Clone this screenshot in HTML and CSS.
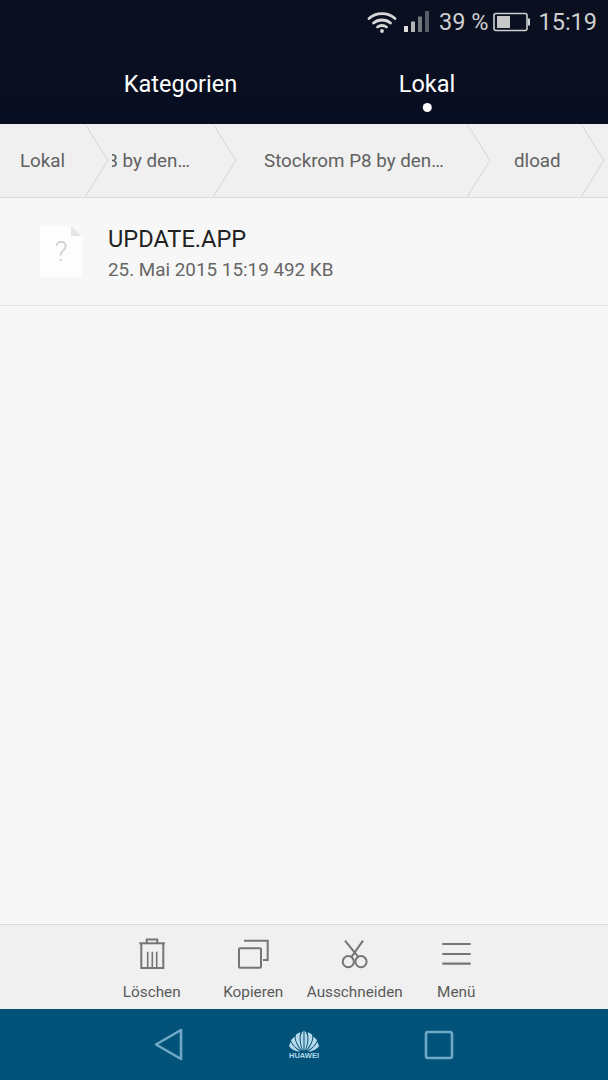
FILE: index.html
```html
<!DOCTYPE html>
<html lang="de">
<head>
    <meta charset="UTF-8">
    <meta name="viewport" content="width=device-width, initial-scale=1.0">
    <title>Dateien</title>
    <link rel="stylesheet" href="styles.css">
</head>
<body>
    <div class="screen">
        <div class="header">
            <div class="status-bar">
                <svg class="icon-wifi" width="30" height="22" viewBox="0 0 30 22" fill="none" stroke="#d8d8d8" stroke-width="2.800" stroke-linecap="round">
                    <path d="M2 7.500 C9 1 21 1 28 7.500"/>
                    <path d="M6.500 12 C11 8 19 8 23.500 12"/>
                    <path d="M10.500 16 C13 14 17 14 19.500 16"/>
                    <circle cx="15" cy="20" r="1.900" fill="#d8d8d8" stroke="none"/>
                </svg>
                <svg class="icon-signal" width="26" height="22" viewBox="0 0 26 22">
                    <rect x="0" y="15" width="4" height="6" fill="#dcdcdc"/>
                    <rect x="7" y="10.500" width="4" height="10.500" fill="#b4b4b4"/>
                    <rect x="14" y="5.500" width="4" height="15.500" fill="#74777e"/>
                    <rect x="21" y="0" width="4" height="21" fill="#5a5d66"/>
                </svg>
                <span class="status-text percent">39 %</span>
                <svg class="icon-battery" width="38" height="20" viewBox="0 0 38 20">
                    <rect x="1" y="1.500" width="33" height="17" rx="2" fill="none" stroke="#d0d0d0" stroke-width="1.600"/>
                    <rect x="4" y="4" width="13" height="12" fill="#c8c8c8"/>
                    <rect x="35" y="6.500" width="2" height="7" fill="#d0d0d0"/>
                </svg>
                <span class="status-text">15:19</span>
            </div>
            <div class="tabs">
                <div class="tab tab-left">Kategorien</div>
                <div class="tab tab-right active">Lokal</div>
            </div>
        </div>

        <div class="breadcrumbs">
            <div class="crumb crumb-1"><span>Lokal</span><svg class="chevron" width="24" height="73" viewBox="0 0 24 73"><path d="M0 0 L23 36.500 L0 73" fill="#f0f0f0" stroke="#d4d4d4"/></svg></div>
            <div class="crumb crumb-2"><span class="crumb-clip">P8 by den…</span><svg class="chevron" width="24" height="73" viewBox="0 0 24 73"><path d="M0 0 L23 36.500 L0 73" fill="#f0f0f0" stroke="#d4d4d4"/></svg></div>
            <div class="crumb crumb-3"><span>Stockrom P8 by den…</span><svg class="chevron" width="24" height="73" viewBox="0 0 24 73"><path d="M0 0 L23 36.500 L0 73" fill="#f0f0f0" stroke="#d4d4d4"/></svg></div>
            <div class="crumb crumb-4"><span>dload</span><svg class="chevron" width="24" height="73" viewBox="0 0 24 73"><path d="M0 0 L23 36.500 L0 73" fill="#f0f0f0" stroke="#d4d4d4"/></svg></div>
        </div>

        <div class="file-list">
            <div class="file-row">
                <div class="file-icon"><span>?</span></div>
                <div class="file-info">
                    <div class="file-name">UPDATE.APP</div>
                    <div class="file-meta">25. Mai 2015 15:19 492 KB</div>
                </div>
            </div>
        </div>

        <div class="toolbar">
            <div class="tool">
                <svg width="32" height="32" viewBox="0 0 32 32" fill="none" stroke="#757575" stroke-width="2">
                    <path d="M3.300 5.300 H29"/>
                    <path d="M10.700 5.300 V1.500 H21.300 V5.300"/>
                    <path d="M5.300 5.300 V30 H27.300 V5.300"/>
                    <path d="M11.700 13.700 V30 M16.300 13.700 V30 M20.700 13.700 V30" stroke-width="1.600"/>
                </svg>
                <span>Löschen</span>
            </div>
            <div class="tool">
                <svg width="32" height="32" viewBox="0 0 32 32" fill="none" stroke="#757575" stroke-width="2">
                    <rect x="2" y="10.300" width="22" height="19.500" rx="1"/>
                    <path d="M7 2.700 H30.700 V22 H26"/>
                </svg>
                <span>Kopieren</span>
            </div>
            <div class="tool">
                <svg width="32" height="32" viewBox="0 0 32 32" fill="none" stroke="#757575" stroke-width="2">
                    <circle cx="9.300" cy="23.700" r="5.600"/>
                    <circle cx="22" cy="23.700" r="5.600"/>
                    <path d="M6 2.700 L19 18.700 M24 2.700 L12.700 18.700"/>
                </svg>
                <span>Ausschneiden</span>
            </div>
            <div class="tool">
                <svg width="32" height="32" viewBox="0 0 32 32" fill="none" stroke="#757575" stroke-width="2.200">
                    <path d="M2.300 6 H30.700 M2.300 16 H30.700 M2.300 25.700 H30.700"/>
                </svg>
                <span>Menü</span>
            </div>
        </div>

        <div class="nav-bar">
            <svg width="30" height="34" viewBox="0 0 30 34" fill="none" stroke="#6fa9c6" stroke-width="2.600" stroke-linejoin="round">
                <path d="M27 2 V31 L2 16.500 Z"/>
            </svg>
            <div class="logo">
                <svg width="30" height="22" viewBox="0 0 30 22" fill="#b4d9ea">
                    <path d="M14.500 21 C11.500 15 10.500 6 13 2.500 L14.500 0.500 Z"/>
                    <path d="M15.500 21 C18.500 15 19.500 6 17 2.500 L15.500 0.500 Z"/>
                    <path d="M13.300 20.500 C9 16 5.500 9.500 7 4.500 L11.300 2 C9.800 8 10.500 14 13.300 20.500 Z"/>
                    <path d="M16.700 20.500 C21 16 24.500 9.500 23 4.500 L18.700 2 C20.200 8 19.500 14 16.700 20.500 Z"/>
                    <path d="M12.300 20.800 C7.500 18.500 2.500 14 2 10 L5.500 6.500 C6 12 8.500 17 12.300 20.800 Z"/>
                    <path d="M17.700 20.800 C22.500 18.500 27.500 14 28 10 L24.500 6.500 C24 12 21.500 17 17.700 20.800 Z"/>
                    <path d="M11 21.500 C7 21.500 2 19.500 0 16 L1.500 12 C4 16 7.500 19.500 11 21.500 Z"/>
                    <path d="M19 21.500 C23 21.500 28 19.500 30 16 L28.500 12 C26 16 22.500 19.500 19 21.500 Z"/>
                </svg>
                <span>HUAWEI</span>
            </div>
            <svg width="30" height="30" viewBox="0 0 30 30" fill="none" stroke="#6fa9c6" stroke-width="2.600">
                <rect x="2" y="2" width="26" height="26" rx="2"/>
            </svg>
        </div>
    </div>
</body>
</html>
```

FILE: styles.css
```css
* {
    margin: 0;
    padding: 0;
    box-sizing: border-box;
}

body {
    font-family: Roboto, 'Liberation Sans', sans-serif;
    background: #f7f7f7;
}

.screen {
    width: 608px;
    height: 1080px;
    display: flex;
    flex-direction: column;
    overflow: hidden;
}

.header {
    height: 124px;
    background: linear-gradient(180deg, #0a1020 0%, #090f20 60%, #080e22 100%);
    color: white;
}

.status-bar {
    height: 44px;
    display: flex;
    align-items: center;
    justify-content: flex-end;
    padding-right: 11px;
}

.status-text {
    font-size: 23.500px;
    color: #cfcfcf;
}

.icon-wifi {
    margin-right: 7px;
}

.icon-signal {
    margin-right: 9px;
}

.percent {
    margin-right: 5px;
}

.icon-battery {
    margin-right: 7px;
}

.tabs {
    position: relative;
    height: 80px;
}

.tab {
    position: absolute;
    top: 26px;
    font-size: 23.500px;
    transform: translateX(-50%);
}

.tab-left {
    left: 180.500px;
}

.tab-right {
    left: 427px;
}

.active::after {
    content: '';
    display: block;
    width: 9px;
    height: 9px;
    margin: 5px auto 0;
    border-radius: 50%;
    background: white;
}

.breadcrumbs {
    height: 74px;
    display: flex;
    background: #f0f0f0;
    border-bottom: 1px solid #dcdcdc;
}

.crumb {
    position: relative;
    height: 73px;
    flex: none;
    display: flex;
    align-items: center;
    padding-top: 1px;
    font-size: 18.800px;
    color: #616161;
    white-space: nowrap;
}

.chevron {
    position: absolute;
    right: -24px;
    top: 0;
    z-index: 2;
}

.crumb-1 {
    width: 85px;
    padding-left: 20px;
}

.crumb-2 {
    width: 128px;
    padding-left: 27px;
}

/* the long name is cut off on its left side */
.crumb-clip {
    width: 78px;
    display: flex;
    justify-content: flex-end;
    overflow: hidden;
}

.crumb-3 {
    width: 254px;
    padding-left: 51px;
}

.crumb-4 {
    width: 114px;
    padding-left: 47px;
}

.file-list {
    flex: 1;
    background: #f7f7f7;
}

.file-row {
    height: 108px;
    display: flex;
    align-items: center;
    padding-left: 40px;
    border-bottom: 1px solid #e0e0e0;
}

.file-icon {
    position: relative;
    width: 42px;
    height: 51px;
    margin-right: 26px;
    background: #fdfdfd;
    display: flex;
    align-items: center;
    justify-content: center;
    font-size: 28px;
    font-weight: 300;
    color: #cfcfcf;
    clip-path: polygon(0 0, 74% 0, 100% 20%, 100% 100%, 0 100%);
}

.file-icon::after {
    content: '';
    position: absolute;
    top: 0;
    right: 0;
    width: 11px;
    height: 10px;
    background: linear-gradient(to top right, #e6e6e6 50%, transparent 50%);
}

.file-info {
    padding-top: 2px;
}

.file-name {
    font-size: 23.600px;
    color: #222;
    margin-bottom: 6px;
}

.file-meta {
    font-size: 18.850px;
    color: #666;
}

.toolbar {
    height: 85px;
    display: flex;
    justify-content: center;
    background: #f0f0f0;
    border-top: 1px solid #d8d8d8;
}

.tool {
    width: 101.500px;
    display: flex;
    flex-direction: column;
    align-items: center;
    padding-top: 13px;
    gap: 13px;
    font-size: 15.300px;
    color: #5a5a5a;
    white-space: nowrap;
}

.nav-bar {
    height: 71px;
    display: flex;
    align-items: center;
    justify-content: center;
    gap: 105px;
    background: #02527a;
}

.logo {
    width: 30px;
    display: flex;
    flex-direction: column;
    align-items: center;
    color: #b4d9ea;
    font-family: 'Liberation Sans', sans-serif;
    font-size: 7.500px;
    font-weight: bold;
    line-height: 8px;
}
```
